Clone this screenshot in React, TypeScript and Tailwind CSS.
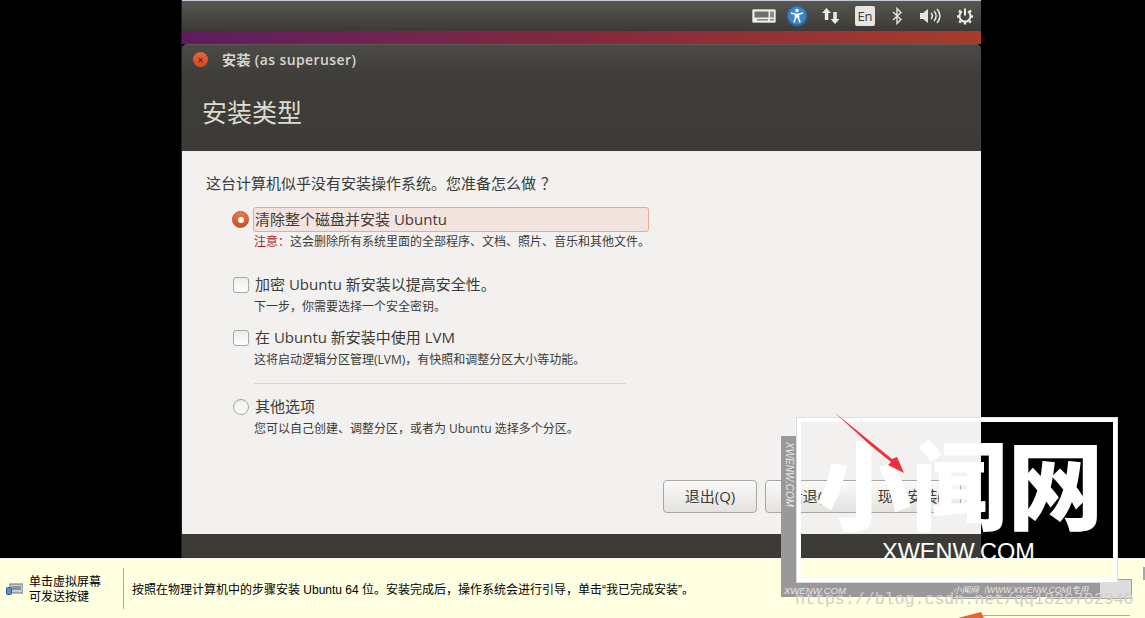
const ui = "font-['Open_Sans','Noto_Sans_CJK_SC',sans-serif]";

function Option({ kind, checked, label, note, hint }: { kind: "radio" | "check"; checked?: boolean; label: string; note?: string; hint: string }) {
  return (
    <div className="flex gap-[4px]">
      <div className="w-[17px] pt-[4px] shrink-0">
        {kind === "radio" ? (
          checked ? (
            <div className="w-[17px] h-[17px] rounded-full bg-gradient-to-b from-[#ef7a4c] to-[#c94f1f] border border-[#b5532b] flex items-center justify-center">
              <div className="w-[6px] h-[6px] rounded-full bg-white" />
            </div>
          ) : (
            <div className="ml-[1px] w-[16px] h-[16px] rounded-full bg-gradient-to-b from-[#eeedeb] to-[#ffffff] border border-[#a8a6a2]" />
          )
        ) : (
          <div className="ml-[1px] w-[16px] h-[16px] rounded-[3px] bg-gradient-to-b from-[#eeedeb] to-[#ffffff] border border-[#a8a6a2]" />
        )}
      </div>
      <div className="flex flex-col pl-[1px]">
        <div className={checked ? "w-[396px] h-[25px] -ml-[1px] pl-[1px] rounded-[3px] border border-[#f0a88c] bg-[#f3e4df] flex items-center text-[15px] text-[#3c3b37]" : "h-[25px] pl-[1px] pb-[2px] flex items-center text-[15px] text-[#3c3b37]"}>
          {label}
        </div>
        <div className={note ? "text-[12px] leading-[16px] mt-[2px] -mb-[1px] text-[#3c3b37] whitespace-nowrap" : "text-[12px] leading-[16px] mt-[1px] text-[#3c3b37] whitespace-nowrap"}>
          {note && <span className="text-[#a81c1c]">{note}</span>}
          {hint}
        </div>
      </div>
    </div>
  );
}

function Btn({ label }: { label: string }) {
  return (
    <div className="w-[94px] h-[33px] rounded-[4px] border border-[#a9a7a2] bg-gradient-to-b from-[#fbfafa] to-[#e4e2df] flex items-center justify-center text-[15px] text-[#3c3b37]">
      {label}
    </div>
  );
}

export default function App() {
  return (
    <div className={`relative w-[1145px] h-[618px] overflow-hidden bg-black flex flex-col ${ui}`}>
      <div className="flex-1 flex flex-col pl-[181px] min-h-0">
        <div className="w-[800px] flex-1 flex flex-col min-h-0 border-l border-[#222]">
          <div className="h-px shrink-0 bg-[#c3cad9]" />
          {/* ubuntu top panel */}
          <div className="h-[30px] shrink-0 bg-gradient-to-b from-[#575651] to-[#3b3a36] flex items-center justify-end text-[#e6e5e1]">
            <svg width="24" height="14" viewBox="0 0 24 14" className="mr-[10px]">
              <rect x="0.5" y="0.5" width="23" height="13" rx="1" fill="#f0efeb" stroke="#b9b8b2" />
              <rect x="2.5" y="2.5" width="14" height="6" fill="#6f6e68" />
              <rect x="18" y="2.5" width="4" height="6" fill="#8c8b85" />
              <rect x="5" y="10" width="11" height="1.6" fill="#8c8b85" />
              <rect x="18" y="10" width="4" height="1.6" fill="#8c8b85" />
            </svg>
            <svg width="22" height="22" viewBox="0 0 22 22" className="mr-[14px]">
              <circle cx="11" cy="11" r="10.5" fill="#2b639f" />
              <circle cx="11" cy="10.5" r="9" fill="#3f85c6" />
              <circle cx="11" cy="5.5" r="1.8" fill="#fff" />
              <path d="M5 8 L9.5 9.2 H12.5 L17 8 M9.5 9 V13 L8 17.5 M12.5 9 V13 L14 17.5 M9.5 12 H12.5" stroke="#fff" strokeWidth="1.5" fill="none" />
              <rect x="9.5" y="9" width="3" height="4" fill="#fff" />
            </svg>
            <svg width="18" height="18" viewBox="0 0 18 18" className="mr-[15px]" fill="#ecebe7">
              <path d="M4.5 1 L9 6 H6.3 V13 H2.8 V6 H0 Z" />
              <path d="M13 17 L8.6 12 H11.3 V5 H14.8 V12 H17.5 Z" />
            </svg>
            <div className="w-[20px] h-[20px] rounded-[2px] bg-[#e6e5e1] text-[#3c3b37] text-[13px] leading-[20px] text-center mr-[17px]">En</div>
            <svg width="10" height="18" viewBox="0 0 10 18" fill="none" stroke="#e6e5e1" strokeWidth="1.4" className="mr-[17px]">
              <path d="M1 5 L9 12.5 L5 16.5 V1.5 L9 5.5 L1 13" />
            </svg>
            <svg width="22" height="18" viewBox="0 0 22 18" fill="none" stroke="#e6e5e1" strokeWidth="1.6" className="mr-[15px]">
              <path d="M1 6 H4 L9 2 V16 L4 12 H1 Z" fill="#e6e5e1" stroke="none" />
              <path d="M12 6 A4 4 0 0 1 12 12" />
              <path d="M15 4 A7 7 0 0 1 15 14" />
              <path d="M18 2 A10 10 0 0 1 18 16" />
            </svg>
            <svg width="18" height="18" viewBox="0 0 18 18" fill="none" stroke="#ecebe7" className="mr-[7px]">
              <path d="M6 4.5 A5.5 5.5 0 1 0 12 4.5" strokeWidth="2" />
              <path d="M9 1.5 V8.5" strokeWidth="2" />
              <path d="M1 9.5 H3.2 M14.8 9.5 H17 M3 3.5 L4.6 5 M15 3.5 L13.4 5 M3.2 15.5 L4.8 14 M14.8 15.5 L13.2 14 M9 15 V17.5" strokeWidth="2.4" />
            </svg>
          </div>
          {/* desktop wallpaper strip */}
          <div className="h-[13px] shrink-0 bg-gradient-to-r from-[#5e1c60] via-[#84283c] to-[#a83c2a]" />
          {/* window */}
          <div className="flex-1 flex flex-col min-h-0">
            <div className="h-[107px] shrink-0 rounded-t-[5px] bg-gradient-to-b from-[#4b4a46] via-[#3e3d39] via-[30%] to-[#3c3b37] border-t border-[#5a5954] flex flex-col">
              <div className="h-[28px] flex items-center pl-[11px]">
                <div className="w-[15px] h-[15px] rounded-full bg-gradient-to-b from-[#e8643a] to-[#d84a1b] flex items-center justify-center text-[#4a2012] text-[11px] leading-none mt-[1px]">×</div>
                <span className="ml-[14px] text-[14px] tracking-[0.4px] font-semibold text-[#d8d6d0]">安装 (as superuser)</span>
              </div>
              <div className="pl-[20px] mt-[21px] text-[25px] leading-[36px] text-[#dfdbd2]">安装类型</div>
            </div>
            <div className="flex-1 min-h-0 bg-[#f2f1f0] flex flex-col pl-[24px] pt-[22px]">
              <div className="text-[15px] leading-[20px] text-[#3c3b37]">
                这台计算机似乎没有安装操作系统。您准备怎么做<span className="ml-[5px]">？</span>
              </div>
              <div className="pl-[26px] mt-[14px] flex flex-col">
                <Option kind="radio" checked label="清除整个磁盘并安装 Ubuntu" note="注意：" hint="这会删除所有系统里面的全部程序、文档、照片、音乐和其他文件。" />
                <div className="h-[24px]" />
                <Option kind="check" label="加密 Ubuntu 新安装以提高安全性。" hint="下一步，你需要选择一个安全密钥。" />
                <div className="h-[11px]" />
                <Option kind="check" label="在 Ubuntu 新安装中使用 LVM" hint="这将启动逻辑分区管理(LVM)，有快照和调整分区大小等功能。" />
                <div className="ml-[22px] mt-[15px] mb-[11px] w-[372px] h-px bg-[#d8d6d3]" />
                <Option kind="radio" label="其他选项" hint="您可以自己创建、调整分区，或者为 Ubuntu 选择多个分区。" />
              </div>
              <div className="mt-auto mb-[21px] flex gap-[8px] pl-[457px]">
                <Btn label="退出(Q)" />
                <Btn label="后退(B)" />
                <Btn label="现在安装(I)" />
              </div>
            </div>
            <div className="h-[24px] shrink-0 bg-[#3c3b37]" />
          </div>
        </div>
      </div>

      {/* vmware hint bar */}
      <div className="h-[60px] shrink-0 bg-[#ffffe1] border-t border-[#f4f4ea] flex items-center text-[12px] text-black font-['Liberation_Sans','Noto_Sans_CJK_SC',sans-serif]">
        <svg width="17" height="14" viewBox="0 0 17 14" className="ml-[6px]">
          <rect x="4" y="2" width="13" height="9" fill="#c9ced6" stroke="#6a7484" />
          <rect x="6" y="4" width="9" height="4" fill="#8b93a0" />
          <rect x="0.5" y="5.5" width="5" height="7" rx="1" fill="#5c90c8" stroke="#33557d" />
        </svg>
        <div className="ml-[6px] w-[94px] leading-[15px] pt-[3px]">
          单击虚拟屏幕
          <br />
          可发送按键
        </div>
        <div className="w-px h-[41px] bg-[#a9a9a0]" />
        <div className="ml-[8px] pt-[3px]">按照在物理计算机中的步骤安装 Ubuntu 64 位。安装完成后，操作系统会进行引导，单击“我已完成安装”。</div>
        <div className="ml-auto mr-[13px] flex gap-[10px]">
          <div className="w-[84px] h-[20px] border border-[#a0a0a0] bg-[#e4e4e0]" />
          <div className="w-[85px] h-[20px] border border-[#a0a0a0] bg-[#dcdcdc]" />
        </div>
      </div>

      {/* watermark overlay */}
      <div className="absolute left-[781px] top-[436px] w-[319px] h-[161px] border-l-[16px] border-b-[16px] border-[#9a9898]" />
      <div className="absolute left-[797px] top-[418px] w-[320px] h-[164px] border-[4px] border-white outline outline-1 outline-[#dedede]" />
      <div className="absolute left-[797px] top-[426px] w-[325px] text-center text-[96px] leading-[110px] font-black text-white whitespace-nowrap font-['Noto_Sans_CJK_SC',sans-serif]">小闻网</div>
      <div className="absolute left-[882px] top-[538px] text-[23.5px] leading-[28px] text-white font-['Liberation_Sans',sans-serif]">XWENW.COM</div>
      <div className="absolute left-[783px] top-[442px] [writing-mode:vertical-rl] text-[10px] leading-[12px] italic text-[#e8e8e8] font-['Liberation_Sans',sans-serif]">XWENW.COM</div>
      <div className="absolute left-[784px] top-[585px] text-[9.5px] leading-[12px] italic text-[#e8e8e8] font-['Liberation_Sans',sans-serif]">XWENW.COM</div>
      <div className="absolute left-[953px] top-[584px] text-[8.5px] leading-[12px] italic text-[#e8e8e8] whitespace-nowrap font-['Liberation_Sans','Noto_Sans_CJK_SC',sans-serif]">小闻网（WWW.XWENW.COM)专用</div>
      <div className="absolute left-[795px] top-[590px] text-[16.6px] leading-[20px] text-[#cfcfc6] whitespace-nowrap font-['Liberation_Mono',monospace]">https://blog.csdn.net/qq1826702940</div>

      {/* red arrow and stray marks from the screenshot */}
      <svg width="1145" height="618" viewBox="0 0 1145 618" className="absolute left-0 top-0 pointer-events-none">
        <polygon points="834,412 892,459 897,457 904,473 888,465 891,462 870,445" fill="#f03038" />
        <polygon points="958,618 981,612 984,618" fill="#f0602a" />
      </svg>
      <div className="absolute left-[983px] top-[615px] w-[147px] h-px bg-[#b0b0a8]" />
      <div className="absolute left-[1143px] top-[567px] w-[2px] h-[13px] bg-[#a8a8a8]" />
    </div>
  );
}
